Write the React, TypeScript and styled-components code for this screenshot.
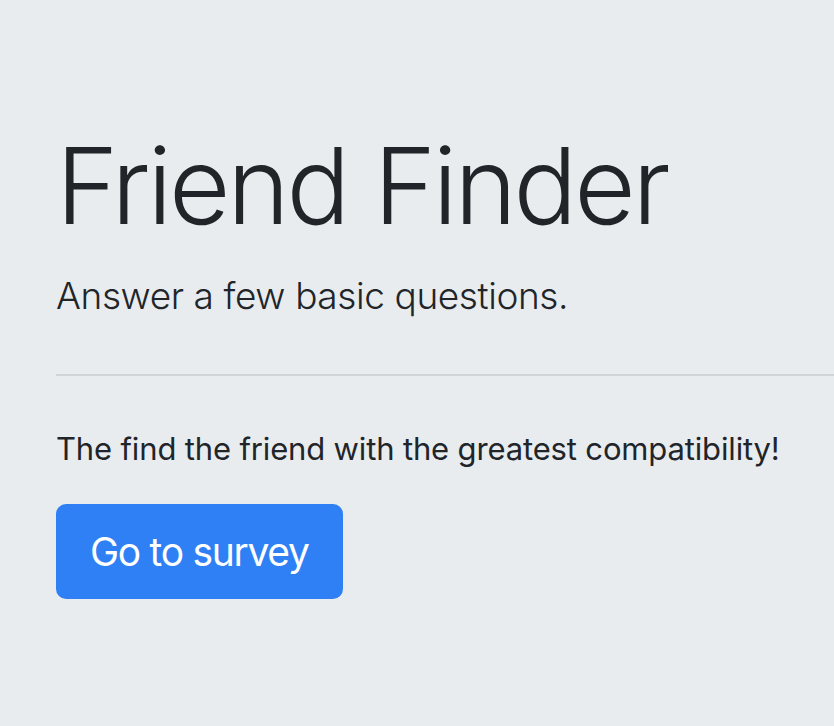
import React from 'react';
import styled, { createGlobalStyle } from 'styled-components';

const GlobalStyle = createGlobalStyle`
  html, body {
    margin: 0;
    padding: 0;
    background: #e9ecef;
  }
  body {
    font-family: 'Inter', 'Roboto', 'Liberation Sans', sans-serif;
    color: #212529;
    overflow: hidden;
  }
`;

const Jumbotron = styled.section`
  background: #e9ecef;
  min-height: 726px;
  padding: 122px 0 0 56px;
  box-sizing: border-box;
`;

const Title = styled.h1`
  margin: 0 0 19px;
  font-size: 106px;
  font-weight: 300;
  line-height: 1.2;
  letter-spacing: -3.2px;
`;

const Lead = styled.p`
  margin: 0 0 50px;
  font-size: 37px;
  font-weight: 300;
  line-height: 1.5;
  letter-spacing: -0.4px;
`;

const Divider = styled.hr`
  margin: 0 0 50px;
  border: 0;
  border-top: 2px solid rgba(0, 0, 0, 0.1);
`;

const Text = styled.p`
  margin: 0 0 32px;
  font-size: 31px;
  font-weight: 400;
  line-height: 1.5;
  letter-spacing: -0.15px;
`;

const Button = styled.a`
  display: inline-block;
  box-sizing: border-box;
  height: 95px;
  padding: 16px 32px;
  border: 2px solid #2f7ff5;
  border-radius: 10px;
  background: #2f7ff5;
  color: #fff;
  font-size: 39px;
  font-weight: 400;
  line-height: 60px;
  letter-spacing: -1.3px;
  text-decoration: none;
`;

export default function App() {
  return (
    <>
      <GlobalStyle />
      <Jumbotron>
        <Title>Friend Finder</Title>
        <Lead>Answer a few basic questions.</Lead>
        <Divider />
        <Text>The find the friend with the greatest compatibility!</Text>
        <Button href="#survey">Go to survey</Button>
      </Jumbotron>
    </>
  );
}
